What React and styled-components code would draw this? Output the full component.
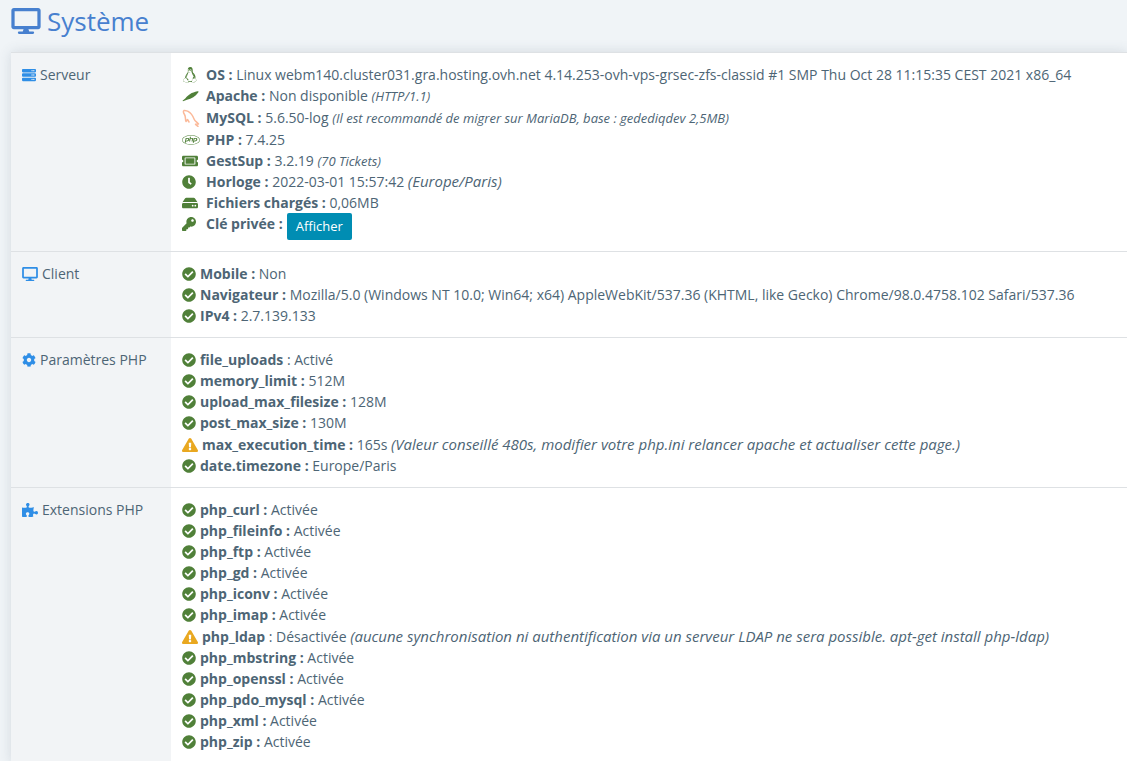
import React from "react";
import styled, { createGlobalStyle } from "styled-components";
import {
  FaServer,
  FaCog,
  FaPuzzlePiece,
  FaLinux,
  FaPhp,
  FaTicketAlt,
  FaClock,
  FaHdd,
  FaKey,
  FaCheckCircle,
  FaExclamationTriangle,
} from "react-icons/fa";

const palette = {
  page: "#f0f4f7",
  title: "#4780cf",
  text: "#4d6575",
  blue: "#2f8ee6",
  green: "#508039",
  orange: "#e9a820",
  salmon: "#fbb999",
  button: "#008db3",
  side: "#f2f4f6",
  line: "#dee1e4",
};

const GlobalStyle = createGlobalStyle`
  * {
    box-sizing: border-box;
  }
  body {
    margin: 0;
    background-color: ${palette.page};
    color: ${palette.text};
    font-family: "Open Sans", sans-serif;
    font-size: 14px;
    line-height: 21px;
  }
`;

const Page = styled.main`
  min-height: 100vh;
  padding-left: 11px;
  overflow: hidden;
`;

const PageTitle = styled.h1`
  display: flex;
  align-items: center;
  gap: 6px;
  height: 42px;
  margin: 0 0 10px;
  color: ${palette.title};
  font-size: 26px;
  font-weight: 400;
  line-height: 42px;
`;

const Card = styled.section`
  background-color: #fff;
  box-shadow: 0 0 12px rgba(60, 80, 100, 0.16);
`;

const InfoTable = styled.table`
  width: 100%;
  border-collapse: separate;
  border-spacing: 0;
`;

const Side = styled.th`
  width: 160px;
  padding: 11px;
  border-top: 1px solid ${palette.line};
  background-color: ${palette.side};
  font-weight: 400;
  text-align: left;
  vertical-align: top;
  white-space: nowrap;
`;

const SideLabel = styled.div`
  display: flex;
  align-items: center;
  gap: 4px;
`;

const Content = styled.td`
  padding: 11px;
  border-top: 1px solid ${palette.line};
  vertical-align: top;
`;

const List = styled.ul`
  margin: 0;
  padding: 0;
  list-style: none;
`;

const Row = styled.li`
  display: flex;
  align-items: ${(props) => (props.$top ? "flex-start" : "flex-end")};
  gap: 4px;
  min-height: ${(props) => (props.$tall ? 22 : 21)}px;
  white-space: nowrap;
`;

const IconSlot = styled.span`
  display: flex;
  flex: none;
  align-items: center;
  width: ${(props) => (props.$wide ? "20px" : "auto")};
  height: 21px;
  color: ${(props) => props.$color || palette.green};
`;

const Note = styled.em`
  font-size: ${(props) => (props.$small ? 13 : 15)}px;
  line-height: 1;
`;

const ShowButton = styled.button`
  height: 27px;
  padding: 0 9px;
  border: 0;
  border-radius: 2px;
  background-color: ${palette.button};
  color: #fff;
  font-family: inherit;
  font-size: 13px;
  line-height: 27px;
  cursor: pointer;
`;

function DesktopIcon({ width, height }) {
  return (
    <svg width={width} height={height} viewBox="0 0 576 512" fill="currentColor" aria-hidden="true">
      <path d="M528 0H48C21.500 0 0 21.500 0 48v320c0 26.500 21.500 48 48 48h192l-16 48h-72c-13.300 0-24 10.700-24 24s10.700 24 24 24h272c13.300 0 24-10.700 24-24s-10.700-24-24-24h-72l-16-48h192c26.500 0 48-21.500 48-48V48c0-26.500-21.500-48-48-48zM512 352H64V64h448z" />
    </svg>
  );
}

function FeatherIcon() {
  return (
    <svg width="17" height="14" viewBox="0 0 17 14" fill="currentColor" aria-hidden="true">
      <path d="M0.500 11.800L3.500 9.200C6 6 9.500 3.500 15.500 2.300C16.700 2.200 16.800 2.800 16 3.800C13.500 7.200 9.500 10 5 10.700L1 12.300z" />
    </svg>
  );
}

function DolphinIcon() {
  return (
    <svg width="18" height="18" viewBox="0 0 18 18" fill="none" stroke="currentColor" strokeWidth="1.500" strokeLinejoin="round" strokeLinecap="round" aria-hidden="true">
      <path d="M4 12.500C3 10 4 8 2.500 5.500C1.500 4 0.800 2.500 2 1.500C3.500 1 4.500 2 6 2.300C9.500 4 11 7 12.300 10.500C13 12.300 15 13 16.500 15L13.500 15.300L16 17.300M4 12.500L5.500 10.500L7 13" />
    </svg>
  );
}

const serverRows = [
  { icon: <FaLinux size={16} />, label: "OS :", value: "Linux webm140.cluster031.gra.hosting.ovh.net 4.14.253-ovh-vps-grsec-zfs-classid #1 SMP Thu Oct 28 11:15:35 CEST 2021 x86_64" },
  { icon: <FeatherIcon />, label: "Apache :", value: "Non disponible", small: "(HTTP/1.1)" },
  { icon: <DolphinIcon />, color: palette.salmon, tall: true, label: "MySQL :", value: "5.6.50-log", small: "(Il est recommandé de migrer sur MariaDB, base : gedediqdev 2,5MB)" },
  { icon: <FaPhp size={18} />, tall: true, label: "PHP :", value: "7.4.25" },
  { icon: <FaTicketAlt size={16} />, label: "GestSup :", value: "3.2.19", small: "(70 Tickets)" },
  { icon: <FaClock size={14} />, label: "Horloge :", value: "2022-03-01 15:57:42", note: "(Europe/Paris)" },
  { icon: <FaHdd size={16} />, label: "Fichiers chargés :", value: "0,06MB" },
];

const clientRows = [
  { label: "Mobile :", value: "Non" },
  { label: "Navigateur :", value: "Mozilla/5.0 (Windows NT 10.0; Win64; x64) AppleWebKit/537.36 (KHTML, like Gecko) Chrome/98.0.4758.102 Safari/537.36" },
  { label: "IPv4 :", value: "2.7.139.133" },
];

const settingRows = [
  { label: "file_uploads", value: ": Activé" },
  { label: "memory_limit :", value: "512M" },
  { label: "upload_max_filesize :", value: "128M" },
  { label: "post_max_size :", value: "130M" },
  { warning: true, label: "max_execution_time :", value: "165s", note: "(Valeur conseillé 480s, modifier votre php.ini relancer apache et actualiser cette page.)" },
  { label: "date.timezone :", value: "Europe/Paris" },
];

const extensionRows = [
  { label: "php_curl :", value: "Activée" },
  { label: "php_fileinfo :", value: "Activée" },
  { label: "php_ftp :", value: "Activée" },
  { label: "php_gd :", value: "Activée" },
  { label: "php_iconv :", value: "Activée" },
  { label: "php_imap :", value: "Activée" },
  { warning: true, label: "php_ldap", value: ": Désactivée", note: "(aucune synchronisation ni authentification via un serveur LDAP ne sera possible. apt-get install php-ldap)" },
  { label: "php_mbstring :", value: "Activée" },
  { label: "php_openssl :", value: "Activée" },
  { label: "php_pdo_mysql :", value: "Activée" },
  { label: "php_xml :", value: "Activée" },
  { label: "php_zip :", value: "Activée" },
];

function ServerRow({ row }) {
  return (
    <Row $tall={row.tall}>
      <IconSlot $wide $color={row.color}>
        {row.icon}
      </IconSlot>
      <span>
        <b>{row.label}</b> {row.value} {row.small && <Note $small>{row.small}</Note>}
        {row.note && <Note>{row.note}</Note>}
      </span>
    </Row>
  );
}

function StateRow({ row }) {
  return (
    <Row $tall={row.warning}>
      <IconSlot $color={row.warning ? palette.orange : palette.green}>
        {row.warning ? <FaExclamationTriangle size={16} /> : <FaCheckCircle size={14} />}
      </IconSlot>
      <span>
        <b>{row.label}</b> {row.value} {row.note && <Note>{row.note}</Note>}
      </span>
    </Row>
  );
}

function Section({ icon, title, children }) {
  return (
    <tr>
      <Side scope="row">
        <SideLabel>
          <IconSlot $color={palette.blue}>{icon}</IconSlot>
          {title}
        </SideLabel>
      </Side>
      <Content>
        <List>{children}</List>
      </Content>
    </tr>
  );
}

function App() {
  return (
    <>
      <GlobalStyle />
      <Page>
        <PageTitle>
          <DesktopIcon width={30} height={26} />
          Système
        </PageTitle>
        <Card>
          <InfoTable>
            <tbody>
              <Section icon={<FaServer size={14} />} title="Serveur">
                {serverRows.map((row) => (
                  <ServerRow key={row.label} row={row} />
                ))}
                <Row $top>
                  <IconSlot $wide>
                    <FaKey size={14} />
                  </IconSlot>
                  <b>Clé privée :</b>
                  <ShowButton type="button">Afficher</ShowButton>
                </Row>
              </Section>
              <Section icon={<DesktopIcon width={16} height={14} />} title="Client">
                {clientRows.map((row) => (
                  <StateRow key={row.label} row={row} />
                ))}
              </Section>
              <Section icon={<FaCog size={14} />} title="Paramètres PHP">
                {settingRows.map((row) => (
                  <StateRow key={row.label} row={row} />
                ))}
              </Section>
              <Section icon={<FaPuzzlePiece size={16} />} title="Extensions PHP">
                {extensionRows.map((row) => (
                  <StateRow key={row.label} row={row} />
                ))}
              </Section>
            </tbody>
          </InfoTable>
        </Card>
      </Page>
    </>
  );
}

export default App;
